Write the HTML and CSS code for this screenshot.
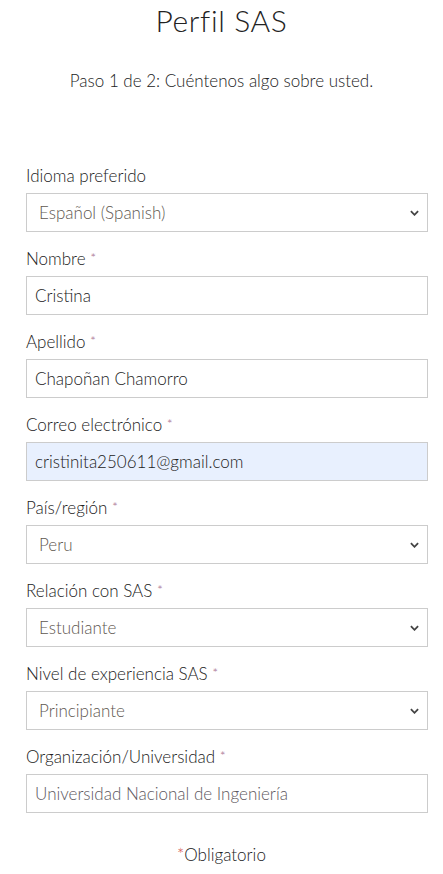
FILE: index.html
```html
<!DOCTYPE html>
<html lang="es">
<head>
<meta charset="utf-8">
<title>Perfil SAS</title>
<link rel="stylesheet" href="styles.css">
</head>
<body>
<main class="page">
  <h1 class="title">Perfil SAS</h1>
  <p class="subtitle">Paso 1 de 2: Cuéntenos algo sobre usted.</p>
  <form class="form">
    <div class="field">
      <label class="label">Idioma preferido</label>
      <div class="select"><span>Español (Spanish)</span><svg class="chev" viewBox="0 0 10 6" width="9" height="6"><path d="M1 1 L5 5 L9 1" fill="none" stroke="#444" stroke-width="2"/></svg></div>
    </div>
    <div class="field">
      <label class="label">Nombre <span class="req">*</span></label>
      <div class="input">Cristina</div>
    </div>
    <div class="field">
      <label class="label">Apellido <span class="req">*</span></label>
      <div class="input">Chapoñan Chamorro</div>
    </div>
    <div class="field">
      <label class="label">Correo electrónico <span class="req">*</span></label>
      <div class="input autofill">cristinita250611@gmail.com</div>
    </div>
    <div class="field">
      <label class="label">País/región <span class="req">*</span></label>
      <div class="select"><span>Peru</span><svg class="chev" viewBox="0 0 10 6" width="9" height="6"><path d="M1 1 L5 5 L9 1" fill="none" stroke="#444" stroke-width="2"/></svg></div>
    </div>
    <div class="field">
      <label class="label">Relación con SAS <span class="req">*</span></label>
      <div class="select"><span>Estudiante</span><svg class="chev" viewBox="0 0 10 6" width="9" height="6"><path d="M1 1 L5 5 L9 1" fill="none" stroke="#444" stroke-width="2"/></svg></div>
    </div>
    <div class="field">
      <label class="label">Nivel de experiencia SAS <span class="req">*</span></label>
      <div class="select"><span>Principiante</span><svg class="chev" viewBox="0 0 10 6" width="9" height="6"><path d="M1 1 L5 5 L9 1" fill="none" stroke="#444" stroke-width="2"/></svg></div>
    </div>
    <div class="field">
      <label class="label">Organización/Universidad <span class="req">*</span></label>
      <div class="input muted">Universidad Nacional de Ingeniería</div>
    </div>
  </form>
  <p class="required-note"><span class="req-red">*</span>Obligatorio</p>
</main>
</body>
</html>
```
FILE: styles.css
```css
html, body {
  margin: 0;
  padding: 0;
  background: #fff;
}
body {
  font-family: Lato, "Open Sans", sans-serif;
  font-weight: 300;
  color: #222;
}
.page {
  padding: 3px 15px 0 26px;
}
.title {
  margin: 0;
  text-align: center;
  font-size: 30px;
  line-height: 34px;
  font-weight: 300;
  letter-spacing: 0.6px;
  color: #222;
  padding-right: 11px;
}
.subtitle {
  margin: 33px 0 0;
  text-align: center;
  font-size: 17px;
  line-height: 22px;
  padding-right: 11px;
}
.form {
  margin-top: 73px;
  display: flex;
  flex-direction: column;
  gap: 16px;
}
.field {
  display: flex;
  flex-direction: column;
  gap: 6px;
}
.label {
  display: block;
  height: 22px;
  font-size: 17px;
  line-height: 22px;
}
.req {
  color: #a56b8c;
  font-size: 14px;
  line-height: 1;
  vertical-align: 2px;
}
.input, .select {
  box-sizing: border-box;
  width: 402px;
  height: 39px;
  border: 1px solid #ccc;
  font-size: 17px;
  display: flex;
  align-items: center;
  background: #fff;
}
.input {
  padding-left: 8px;
  color: #222;
}
.input.autofill {
  background: #e8f0fe;
}
.input.muted {
  color: #5e5860;
}
.select {
  padding: 0 8px 0 12px;
  justify-content: space-between;
  color: #5e5750;
}
.chev {
  display: block;
}
.required-note {
  margin: 31px 0 0;
  text-align: center;
  font-size: 17px;
  line-height: 22px;
  padding-right: 11px;
}
.req-red {
  color: #d2504a;
}
```
